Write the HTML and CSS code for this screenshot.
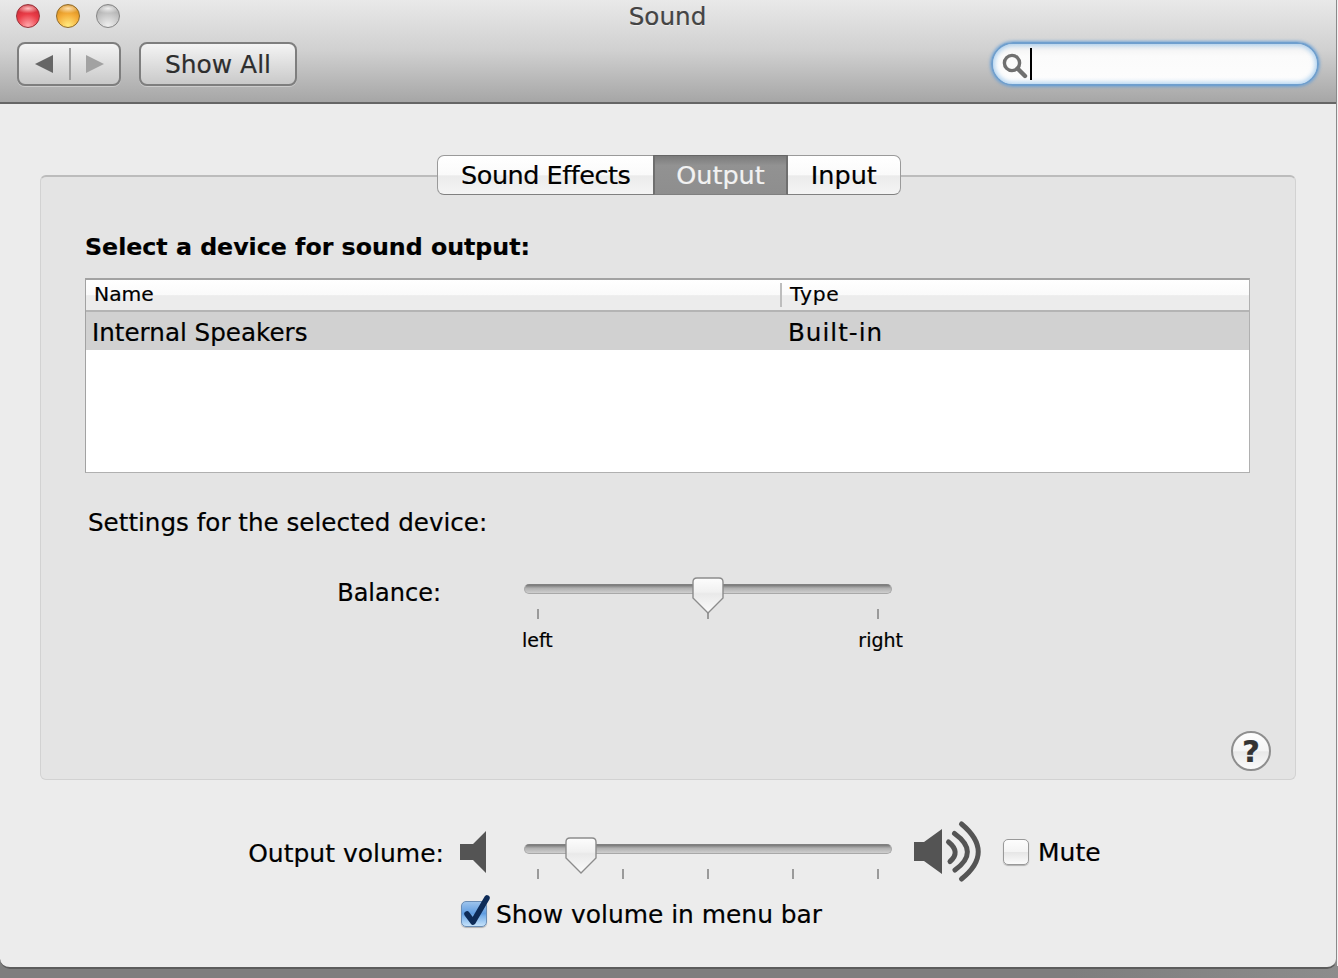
FILE: index.html
```html
<!DOCTYPE html>
<html lang="en">
<head>
<meta charset="utf-8">
<title>Sound</title>
<link rel="stylesheet" href="styles.css">
</head>
<body>
<div class="window">
  <header class="toolbar">
    <div class="title-row">
      <div class="lights">
        <span class="light red"></span>
        <span class="light amber"></span>
        <span class="light grey"></span>
      </div>
      <div class="title">Sound</div>
      <div></div>
    </div>
    <div class="tool-row">
      <div class="tool-left">
        <div class="btn nav">
          <svg class="arrow" width="18" height="20" viewBox="0 0 18 20"><path class="arrow-on" d="M0 10 18 1V19Z"/></svg>
          <span class="nav-div"></span>
          <svg class="arrow" width="18" height="20" viewBox="0 0 18 20"><path class="arrow-off" d="M18 10 0 1V19Z"/></svg>
        </div>
        <button class="btn showall">Show All</button>
      </div>
      <div class="search">
        <svg class="glass" width="26" height="26" viewBox="0 0 26 26"><circle cx="10" cy="10" r="7.6" fill="none" stroke="#707070" stroke-width="3.4"/><path d="M15.5 15.5 23 23" stroke="#707070" stroke-width="4.400" stroke-linecap="round"/></svg>
        <span class="caret"></span>
      </div>
    </div>
  </header>

  <main class="content">
    <nav class="tabs">
      <span class="tab first">Sound Effects</span>
      <span class="tab active">Output</span>
      <span class="tab last">Input</span>
    </nav>
    <section class="panel">
      <h2 class="heading">Select a device for sound output:</h2>
      <div class="table">
        <div class="thead">
          <span class="th name">Name</span>
          <span class="th type">Type</span>
        </div>
        <div class="tr">
          <span class="td name">Internal Speakers</span>
          <span class="td type">Built-in</span>
        </div>
      </div>
      <p class="settings">Settings for the selected device:</p>
      <div class="balance">
        <span class="field-label">Balance:</span>
        <div class="slider">
          <div class="track"></div>
          <svg class="thumb thumb-mid" width="32" height="40" viewBox="0 0 32 40"><defs><linearGradient id="tg" x1="0" y1="0" x2="0" y2="1"><stop offset="0" stop-color="#fdfdfd"/><stop offset=".4" stop-color="#f0f0f0"/><stop offset=".45" stop-color="#e9e9e9"/><stop offset="1" stop-color="#fbfbfb"/></linearGradient></defs><path d="M1 5Q1 1 5 1H27Q31 1 31 5V21L16 36 1 21Z" fill="url(#tg)" stroke="#8c8c8c" stroke-width="1.4"/></svg>
          <div class="ticks"><i></i><i></i><i></i></div>
          <div class="tick-labels"><span>left</span><span>right</span></div>
        </div>
      </div>
      <button class="help">?</button>
    </section>

    <div class="volume">
      <span class="field-label vol-label">Output volume:</span>
      <svg class="spk-small" width="26" height="44" viewBox="0 0 26 44"><path d="M0 14H13L26 1V43L13 30H0Z" fill="#545454"/></svg>
      <div class="slider vol-slider">
        <div class="track"></div>
        <svg class="thumb thumb-low" width="32" height="40" viewBox="0 0 32 40"><path d="M1 5Q1 1 5 1H27Q31 1 31 5V21L16 36 1 21Z" fill="url(#tg)" stroke="#8c8c8c" stroke-width="1.4"/></svg>
        <div class="ticks"><i></i><i></i><i></i><i></i><i></i></div>
      </div>
      <svg class="spk-big" width="67" height="64" viewBox="0 -6 67 64"><path d="M0 16H10L28 3V48L10 35H0Z" fill="#545454"/><g fill="none" stroke="#545454" stroke-width="5" stroke-linecap="round"><path d="M34.5 16Q47 26 36 35.500"/><path d="M40.500 7.500Q66 26 41 44"/><path d="M47.500 -2Q81 26 47.500 53"/></g></svg>
      <span class="check mute"></span>
      <span class="mute-label">Mute</span>
    </div>

    <div class="menubar">
      <span class="check on"><svg width="26" height="26" viewBox="0 0 26 26"><path d="M6 13 12 21 26-3" fill="none" stroke="#0d2b57" stroke-width="5.500" stroke-linecap="round" stroke-linejoin="round"/></svg></span>
      <span class="menubar-label">Show volume in menu bar</span>
    </div>
  </main>
</div>
</body>
</html>
```

FILE: styles.css
```css
* { box-sizing: border-box; }
html, body { margin: 0; padding: 0; }
body {
  width: 1338px;
  height: 978px;
  overflow: hidden;
  font-family: "DejaVu Sans", sans-serif;
  color: #000;
  -webkit-text-stroke: 0.2px;
  background: linear-gradient(to right, transparent 1337px, #f2f2f2 1337px) 0 0 / 100% 966px no-repeat, linear-gradient(to right, #7e7e7e 80%, #8c8c8c);
}
.window {
  width: 1337px;
  height: 969px;
  background: #ececec;
  border-right: 1px solid #8a8a8a;
  border-bottom: 2px solid #5c5c5c;
  border-radius: 0 0 10px 10px;
  overflow: hidden;
  display: flex;
  flex-direction: column;
}

/* toolbar */
.toolbar {
  height: 104px;
  padding-top: 4px;
  background: linear-gradient(to bottom, #e9e9e9, #d0d0d0 50%, #a6a6a6);
  border-bottom: 2px solid #666;
}
.title-row { display: grid; grid-template-columns: 1fr auto 1fr; height: 24px; }
.lights { display: flex; gap: 16px; padding-left: 16px; }
.light { width: 24px; height: 24px; border-radius: 50%; border: 1px solid #777; }
.red { background: radial-gradient(ellipse 55% 22% at 50% 16%, #ffc0c0, transparent), radial-gradient(circle at 50% 95%, #ff9ea2 5%, #ea3d48 50%, #b9202c 100%); border-color: #96333a; }
.amber { background: radial-gradient(ellipse 55% 22% at 50% 16%, #ffe2b0, transparent), radial-gradient(circle at 50% 95%, #ffe67a 5%, #f4ac38 50%, #c47c10 100%); border-color: #8f6a2a; }
.grey { background: radial-gradient(ellipse 55% 22% at 50% 16%, #eeeeee, transparent), radial-gradient(circle at 50% 95%, #ececec 5%, #c6c6c6 50%, #9c9c9c 100%); border-color: #858585; }
.title { font-size: 24.7px; line-height: 24px; padding-top: 1px; margin-left: -1px; color: #444; text-shadow: 0 1px 0 rgba(255,255,255,.5); }
.tool-row { display: flex; justify-content: space-between; margin-top: 14px; padding: 0 17px 0 17px; height: 44px; }
.tool-left { display: flex; gap: 18px; }
.btn {
  height: 44px;
  border: 2px solid #7e7e7e;
  border-radius: 8px;
  background: linear-gradient(to bottom, #f4f4f4, #c9c9c9);
  box-shadow: 0 1px 0 rgba(255,255,255,.35);
}
.nav { width: 104px; display: flex; align-items: center; padding-left: 16px; }
.arrow-on { fill: #666; }
.arrow-off { fill: #a2a2a2; }
.nav-div { width: 2px; height: 32px; background: #9c9c9c; margin: 0 15px 0 16px; }
.showall {
  width: 158px;
  padding: 0;
  font: 24.9px "DejaVu Sans", sans-serif;
  -webkit-text-stroke: 0.2px;
  color: #2e2e2e;
}
.search {
  width: 328px;
  height: 44px;
  border: 2px solid #6f9fce;
  border-radius: 22px;
  background: linear-gradient(to bottom, #f0f0f0, #fbfbfb 30%, #fdfdfd);
  box-shadow: 0 0 3px 1px rgba(105,160,215,.85), inset 0 0 4px 2px rgba(140,190,235,.65);
  display: flex;
  align-items: center;
  padding-left: 9px;
}
.glass { margin-top: 3px; }
.caret { width: 2px; height: 32px; background: #000; margin-left: 2px; }

/* tabs + panel */
.content { flex: 1; padding: 51px 40px 0 40px; }
.tabs { display: flex; justify-content: center; height: 40px; margin: 0 0 -20px 2px; position: relative; z-index: 1; }
.tab {
  font-size: 25.5px;
  line-height: 38px;
  padding: 0 24px;
  background: linear-gradient(to bottom, #fff, #fafafa 50%, #ebebeb 52%, #f4f4f4);
  border: 1px solid #9a9a9a;
  border-left: 0;
  border-right: 0;
  border-bottom-color: #808080;
}
.first { border-left: 1px solid #9a9a9a; border-radius: 7px 0 0 7px; letter-spacing: -0.48px; width: 216px; text-align: center; padding: 0; }
.last { border-right: 1px solid #9a9a9a; border-radius: 0 7px 7px 0; padding: 0 23px 0 23px; }
.active {
  padding: 0 21px 0 21px;
  color: #f2f2f2;
  background: linear-gradient(to bottom, #7b7b7b, #929292 25%, #8e8e8e);
  border-left: 2px solid #6f6f6f;
  border-right: 2px solid #6f6f6f;
  border-top-color: #666;
}
.panel {
  height: 605px;
  background: #e4e4e4;
  border: 1px solid #d2d2d2;
  border-top: 2px solid #bcbcbc;
  border-radius: 6px;
  display: flex;
  flex-direction: column;
}
.heading { margin: 55px 0 0 44px; font-size: 23.7px; font-weight: 700; line-height: 30px; }
.table {
  margin: 16px 0 0 44px;
  width: 1165px;
  height: 195px;
  background: #fff;
  border: 2px solid #a9a9a9;
  border-width: 2px 1px 1px 1px;
  border-color: #a2a2a2 #b0b0b0 #b0b0b0 #a2a2a2;
}
.thead {
  height: 32px;
  display: flex;
  align-items: center;
  background: linear-gradient(to bottom, #fff, #fafafa 50%, #ececec 52%, #ececec);
  border-bottom: 2px solid #b4b4b4;
}
.th { font-size: 20.3px; line-height: 22px; padding-bottom: 2px; }
.th.name { width: 696px; padding-left: 8px; border-right: 2px solid #bdbdbd; }
.th.type { padding-left: 8px; letter-spacing: .7px; }
.tr { height: 38px; display: flex; align-items: center; background: #d1d1d1; }
.td { font-size: 24.6px; line-height: 38px; padding-top: 4px; }
.td.name { width: 696px; padding-left: 6px; flex: none; }
.td.type { padding-left: 6px; letter-spacing: 1px; }
.settings { margin: 35px 0 0 47px; font-size: 24.6px; line-height: 30px; }
.balance { display: flex; margin-top: 40px; }
.field-label { font-size: 24.6px; line-height: 30px; }
.balance .field-label { width: 400px; text-align: right; flex: none; font-size: 24px; }
.slider { width: 368px; margin-left: 83px; padding-top: 7px; position: relative; flex: none; }
.balance .slider { margin-top: -1px; }
.track {
  height: 10px;
  border-radius: 5px;
  background: linear-gradient(to bottom, #777, #b0b0b0 40%, #cfcfcf);
  border: 1px solid #a8a8a8;
  border-top-color: #808080;
}
.thumb { position: absolute; top: 0; }
.thumb-mid { left: 168px; }
.thumb-low { left: 41px; }
.ticks { display: flex; justify-content: space-between; padding: 0 13px; margin-top: 15px; }
.ticks i { display: block; width: 2px; height: 10px; background: #9a9a9a; }
.tick-labels { display: flex; justify-content: space-between; margin: 9px -11px 0 -2px; font-size: 19px; line-height: 24px; }
.help {
  align-self: flex-end;
  margin: auto 24px 8px 0;
  width: 40px;
  height: 40px;
  padding: 0;
  border-radius: 50%;
  border: 2px solid #8e8e8e;
  background: linear-gradient(to bottom, #fdfdfd, #f4f4f4 50%, #e8e8e8 52%, #fbfbfb);
  font: 700 31px/36px "DejaVu Sans", sans-serif;
  color: #333;
}

/* volume */
.volume { display: flex; align-items: center; height: 44px; margin-top: 50px; }
.vol-label { width: 404px; text-align: right; flex: none; padding-top: 3px; font-size: 25px; line-height: 30px; }
.spk-small { margin-left: 16px; flex: none; }
.vol-slider { margin-left: 38px; align-self: flex-start; margin-top: 7px; }
.spk-big { margin-left: 22px; flex: none; }
.check {
  width: 26px;
  height: 26px;
  flex: none;
  border: 1px solid #999;
  border-radius: 5px;
  background: linear-gradient(to bottom, #fdfdfd, #f4f4f4 48%, #e6e6e6 52%, #fbfbfb);
  box-shadow: 0 1px 1px rgba(0,0,0,.25);
}
.mute { margin-left: 22px; }
.mute-label { margin-left: 9px; font-size: 25px; line-height: 30px; padding-top: 2px; }
.menubar { display: flex; align-items: center; height: 30px; margin: 24px 0 0 421px; }
.check.on {
  display: block;
  margin-top: 2px;
  background: linear-gradient(to bottom, #9cc3ec, #5f9ce0 48%, #7cb2ea 60%, #c5e2fa);
  border-color: #6a8db5;
}
.check.on svg { display: block; overflow: visible; margin: -1px; }
.menubar-label { margin-left: 9px; font-size: 24.9px; line-height: 30px; padding-top: 3px; }
```
